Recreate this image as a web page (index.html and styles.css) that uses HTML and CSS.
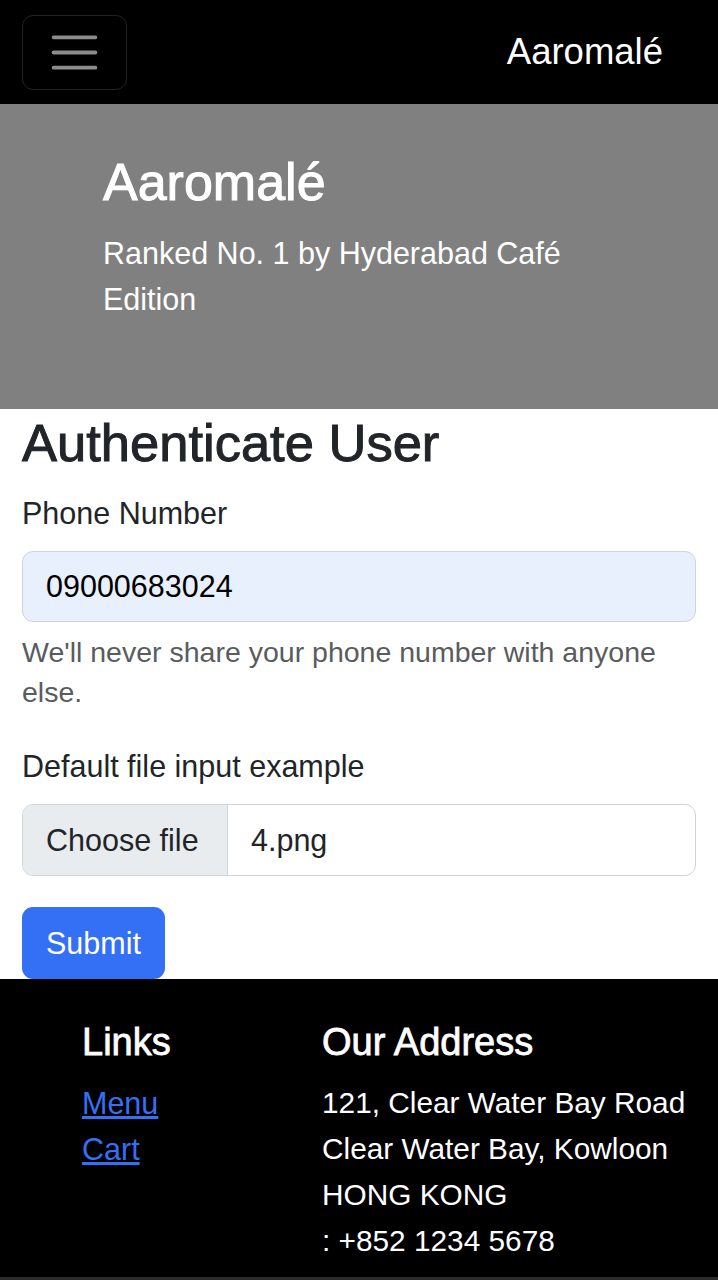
FILE: index.html
```html
<!DOCTYPE html>
<html lang="en">
<head>
    <meta charset="UTF-8">
    <meta name="viewport" content="width=device-width, initial-scale=1.0">
    <title>Aaromalé - Authenticate</title>
    <link rel="stylesheet" href="styles.css">
</head>
<body>

<nav class="navbar">
    <button class="navbar-toggler" type="button" aria-label="Toggle navigation">
        <svg width="57" height="57" viewBox="0 0 30 30">
            <path d="M4 7h22M4 15h22M4 23h22" stroke="rgba(255,255,255,0.55)" stroke-width="2" stroke-linecap="round" fill="none"/>
        </svg>
    </button>
    <a class="navbar-brand" href="#">Aaromalé</a>
</nav>

<header class="hero">
    <h1>Aaromalé</h1>
    <p class="lead">Ranked No. 1 by Hyderabad Café Edition</p>
</header>

<main class="auth">
    <h1>Authenticate User</h1>
    <form id="authForm">
        <div class="form-group">
            <label for="phone">Phone Number</label>
            <input type="text" id="phone" name="phone" class="form-control" value="09000683024" />
            <div class="form-text">We'll never share your phone number with anyone else.</div>
        </div>

        <div class="form-group">
            <label for="formFile">Default file input example</label>
            <div class="file-input">
                <span class="file-button">Choose file</span>
                <span class="file-name">4.png</span>
            </div>
        </div>

        <button type="submit" class="btn-primary">Submit</button>
    </form>
</main>

<footer class="footer">
    <div class="footer-col">
        <h5>Links</h5>
        <a href="#">Menu</a><br>
        <a href="#">Cart</a>
    </div>
    <div class="footer-col">
        <h5>Our Address</h5>
        <address>
            121, Clear Water Bay Road<br>
            Clear Water Bay, Kowloon<br>
            HONG KONG<br>
            : +852 1234 5678
        </address>
    </div>
</footer>

</body>
</html>
```

FILE: styles.css
```css
body {
    font-family: "Liberation Sans", Arial, sans-serif;
    font-size: 30.5px;
    line-height: 46px;
    color: #212529;
    background-color: #2b2b2d;
    margin: 0;
}
.navbar {
    background-color: #000;
    height: 104px;
    display: flex;
    align-items: center;
    justify-content: space-between;
    padding: 0 55px 0 22px;
}
.navbar-toggler {
    width: 105px;
    height: 75px;
    display: flex;
    align-items: center;
    justify-content: center;
    padding: 0;
    background: transparent;
    border: 1px solid #222;
    border-radius: 11px;
}
.navbar-brand {
    color: white;
    font-size: 36.5px;
    text-decoration: none;
}
.hero {
    background-color: #808080;
    color: white;
    height: 305px;
    box-sizing: border-box;
    padding: 47px 103px 0;
}
.hero h1 {
    font-size: 52px;
    line-height: 63px;
    font-weight: 400;
    -webkit-text-stroke: 1px currentColor;
    margin: 0 0 16px;
}
.hero .lead {
    margin: 0;
}
.auth {
    background-color: white;
    padding: 2px 22px 0 22px;
}
.auth h1 {
    font-size: 52.5px;
    line-height: 63px;
    font-weight: 400;
    -webkit-text-stroke: 1px currentColor;
    margin: 0 0 16px;
}
.form-group {
    margin-bottom: 31px;
}
.form-group label {
    display: block;
    margin-bottom: 15px;
}
.form-control {
    display: block;
    width: 100%;
    height: 71px;
    box-sizing: border-box;
    padding: 0 23px;
    font-family: "Liberation Sans", Arial, sans-serif;
    font-size: 30.5px;
    color: #000;
    background-color: #e8f0fe;
    border: 1px solid #ced4da;
    border-radius: 11px;
}
.form-text {
    margin-top: 10px;
    font-size: 28.5px;
    line-height: 40px;
    color: #595c5f;
}
.file-input {
    display: flex;
    height: 72px;
    box-sizing: border-box;
    border: 1px solid #ced4da;
    border-radius: 11px;
    overflow: hidden;
}
.file-button {
    display: flex;
    align-items: center;
    width: 205px;
    box-sizing: border-box;
    padding: 0 23px;
    background-color: #e9ecef;
    border-right: 1px solid #ced4da;
}
.file-name {
    display: flex;
    align-items: center;
    padding: 0 23px;
}
.btn-primary {
    height: 72px;
    padding: 0 24px;
    font-family: "Liberation Sans", Arial, sans-serif;
    font-size: 30.5px;
    color: white;
    background-color: #3470f5;
    border: none;
    border-radius: 11px;
    display: block;
}
.footer {
    background-color: #000;
    color: white;
    display: grid;
    grid-template-columns: 240px 1fr;
    padding: 41px 0 13px 82px;
}
.footer h5 {
    font-size: 38px;
    line-height: 45.6px;
    font-weight: 400;
    -webkit-text-stroke: 0.8px currentColor;
    margin: 0 0 14px;
}
.footer a {
    color: #3470f5;
}
.footer address {
    font-style: normal;
    font-size: 29.8px;
}
```
